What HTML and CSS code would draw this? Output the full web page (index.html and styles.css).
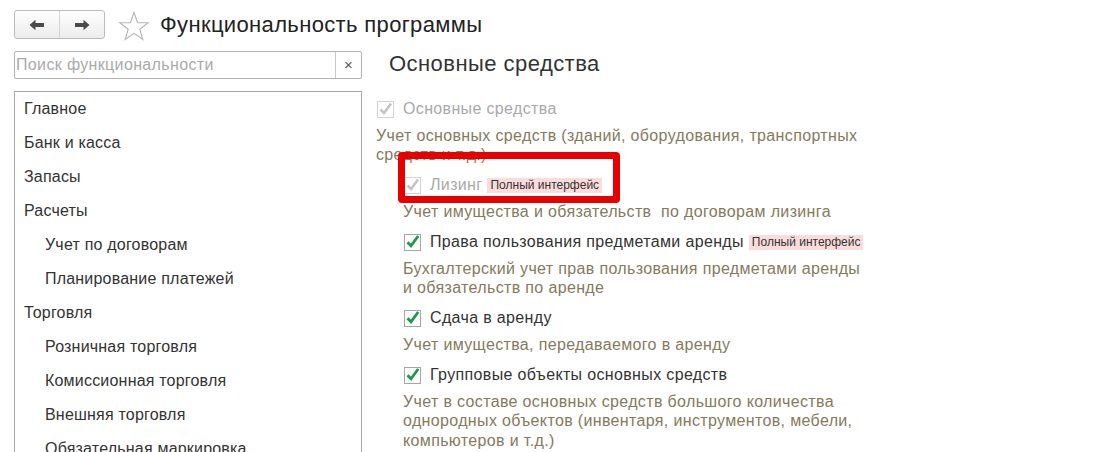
FILE: index.html
```html
<!DOCTYPE html>
<html lang="ru">
<head>
<meta charset="utf-8">
<title>Функциональность программы</title>
<link rel="stylesheet" href="styles.css">
</head>
<body>
<div class="page">
  <header class="topbar">
    <div class="navgroup">
      <button class="navbtn" aria-label="Назад">
        <svg width="16" height="12" viewBox="0 0 16 12"><path d="M0.5 6 L6.5 0.8 L6.5 4 L15 4 L15 8 L6.5 8 L6.5 11.2 Z" fill="#4a4a4a"/></svg>
      </button>
      <button class="navbtn" aria-label="Вперед">
        <svg width="16" height="12" viewBox="0 0 16 12"><path d="M15.5 6 L9.5 0.8 L9.5 4 L1 4 L1 8 L9.5 8 L9.5 11.2 Z" fill="#4a4a4a"/></svg>
      </button>
    </div>
    <svg class="star" width="32" height="30" viewBox="0 0 32 30"><path d="M16 1.5 L19.6 11.6 L30.2 11.8 L21.8 18.3 L24.8 28.5 L16 22.4 L7.2 28.5 L10.2 18.3 L1.8 11.8 L12.4 11.6 Z" fill="none" stroke="#b4b4b4" stroke-width="1.1" stroke-linejoin="miter"/></svg>
    <h1 class="title">Функциональность программы</h1>
  </header>

  <main class="main">
    <aside class="left">
      <div class="search">
        <span class="search-ph">Поиск функциональности</span>
        <span class="search-clear">×</span>
      </div>
      <ul class="sections">
        <li class="sec">Главное</li>
        <li class="sec">Банк и касса</li>
        <li class="sec">Запасы</li>
        <li class="sec">Расчеты</li>
        <li class="sec sub">Учет по договорам</li>
        <li class="sec sub">Планирование платежей</li>
        <li class="sec">Торговля</li>
        <li class="sec sub">Розничная торговля</li>
        <li class="sec sub">Комиссионная торговля</li>
        <li class="sec sub">Внешняя торговля</li>
        <li class="sec sub">Обязательная маркировка</li>
      </ul>
    </aside>

    <section class="right">
      <h2 class="heading">Основные средства</h2>

      <div class="opt">
        <div class="row disabled">
          <span class="cb cb-dis"><svg width="18" height="18" viewBox="0 0 18 18"><rect x="0.5" y="1.5" width="16" height="16" fill="#fff" stroke="#d2d2d2"/><path d="M3.5 9.5 L7 13 L14 3.5" fill="none" stroke="#c4c4c4" stroke-width="2.6"/></svg></span>
          <span class="lbl">Основные средства</span>
        </div>
        <p class="desc">Учет основных средств (зданий, оборудования, транспортных средств и т.д.)</p>
      </div>

      <div class="nested">
        <div class="opt">
          <div class="row disabled">
            <span class="cb cb-dis"><svg width="18" height="18" viewBox="0 0 18 18"><rect x="0.5" y="1.5" width="16" height="16" fill="#fff" stroke="#d2d2d2"/><path d="M3.5 9.5 L7 13 L14 3.5" fill="none" stroke="#c4c4c4" stroke-width="2.6"/></svg></span>
            <span class="lbl">Лизинг</span>
            <span class="badge">Полный интерфейс</span>
          </div>
          <p class="desc">Учет имущества и обязательств&nbsp; по договорам лизинга</p>
        </div>

        <div class="opt">
          <div class="row">
            <span class="cb"><svg width="18" height="18" viewBox="0 0 18 18"><rect x="0.5" y="1.5" width="16" height="16" fill="#fff" stroke="#a6a6a6"/><path d="M3.5 9.3 L7 12.8 L14.2 3" fill="none" stroke="#1d9a45" stroke-width="2.8"/></svg></span>
            <span class="lbl">Права пользования предметами аренды</span>
            <span class="badge">Полный интерфейс</span>
          </div>
          <p class="desc">Бухгалтерский учет прав пользования предметами аренды и обязательств по аренде</p>
        </div>

        <div class="opt">
          <div class="row">
            <span class="cb"><svg width="18" height="18" viewBox="0 0 18 18"><rect x="0.5" y="1.5" width="16" height="16" fill="#fff" stroke="#a6a6a6"/><path d="M3.5 9.3 L7 12.8 L14.2 3" fill="none" stroke="#1d9a45" stroke-width="2.8"/></svg></span>
            <span class="lbl">Сдача в аренду</span>
          </div>
          <p class="desc">Учет имущества, передаваемого в аренду</p>
        </div>

        <div class="opt">
          <div class="row">
            <span class="cb"><svg width="18" height="18" viewBox="0 0 18 18"><rect x="0.5" y="1.5" width="16" height="16" fill="#fff" stroke="#a6a6a6"/><path d="M3.5 9.3 L7 12.8 L14.2 3" fill="none" stroke="#1d9a45" stroke-width="2.8"/></svg></span>
            <span class="lbl">Групповые объекты основных средств</span>
          </div>
          <p class="desc">Учет в составе основных средств большого количества однородных объектов (инвентаря, инструментов, мебели, компьютеров и т.д.)</p>
        </div>

        <div class="highlight" aria-hidden="true"></div>
      </div>
    </section>
  </main>
</div>
</body>
</html>
```
FILE: styles.css
```css
* { box-sizing: border-box; }
html, body {
  margin: 0;
  padding: 0;
  background: #fff;
  font-family: "Liberation Sans", Arial, sans-serif;
  color: #333;
  overflow: hidden;
}
.page {
  padding: 10px 0 0 14px;
  width: 1102px;
  height: 452px;
}
.topbar {
  display: flex;
  align-items: center;
  height: 29px;
}
.navgroup {
  display: flex;
  width: 91px;
  height: 29px;
  border: 1px solid #bcbcbc;
  border-radius: 3px;
  background: linear-gradient(#ffffff, #ececec);
  overflow: hidden;
}
.navbtn {
  flex: 1;
  border: 0;
  margin: 0;
  padding: 0;
  background: transparent;
  display: flex;
  align-items: center;
  justify-content: center;
}
.navbtn + .navbtn { border-left: 1px solid #d4d4d4; }
.star { margin-left: 13px; margin-top: 2px; }
.title {
  margin: 0 0 0 10px;
  font-weight: normal;
  font-size: 22px;
  letter-spacing: 0.35px;
  line-height: 28px;
  color: #222;
}
.main {
  display: grid;
  grid-template-columns: 348px 490px;
  column-gap: 14px;
  margin-top: 12px;
}
.left { display: flex; flex-direction: column; gap: 12px; }
.search {
  height: 28px;
  border: 1px solid #b2b2b2;
  border-radius: 2px;
  display: flex;
  align-items: stretch;
}
.search-ph {
  flex: 1;
  padding-left: 1px;
  font-size: 16px;
  letter-spacing: 0.35px;
  line-height: 26px;
  color: #aaa;
}
.search-clear {
  width: 26px;
  border-left: 1px solid #c8c8c8;
  text-align: center;
  font-size: 15px;
  line-height: 25px;
  color: #555;
}
.sections {
  list-style: none;
  margin: 0;
  padding: 0;
  height: 400px;
  border: 1px solid #a8a8a8;
}
.sec {
  height: 34px;
  line-height: 33px;
  padding-left: 9px;
  font-size: 16px;
  letter-spacing: 0.2px;
  color: #333;
}
.sec.sub { padding-left: 30px; }

.right { position: relative; }
.heading {
  margin: 1px 0 0 13px;
  font-weight: normal;
  font-size: 22px;
  letter-spacing: 0.45px;
  line-height: 24px;
  color: #333;
}
.right > .opt:first-of-type { margin-top: 23px; }
.opt { display: flex; flex-direction: column; }
.row {
  display: flex;
  align-items: center;
  height: 20px;
  margin-bottom: 6.5px;
  font-size: 16px;
  letter-spacing: 0.35px;
}
.cb { width: 18px; height: 18px; margin-left: 1px; margin-right: 8px; display: flex; }
.lbl { color: #333; white-space: nowrap; }
.row.disabled .lbl { color: #a9a9a9; }
.badge {
  margin-left: 5px;
  padding: 0 3px;
  height: 15px;
  line-height: 15px;
  font-size: 12px;
  letter-spacing: 0;
  background: #fbdcdc;
  color: #333;
  white-space: nowrap;
}
.desc {
  margin: 0 0 10.8px 0;
  font-size: 16px;
  letter-spacing: 0.35px;
  line-height: 19.5px;
  color: #857a5c;
}
.nested { padding-left: 27px; position: relative; }
.highlight {
  position: absolute;
  left: 22px;
  top: -23px;
  width: 222px;
  height: 51px;
  border: 7px solid #e80000;
  border-radius: 4px;
  pointer-events: none;
}
```
